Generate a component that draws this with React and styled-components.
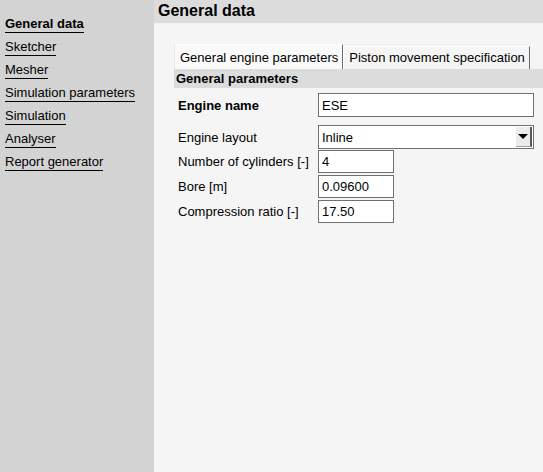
import React from 'react';
import styled, { createGlobalStyle } from 'styled-components';

const Global = createGlobalStyle`
  html, body {
    margin: 0;
    padding: 0;
    background: #f5f5f5;
  }
  body {
    font-family: "Liberation Sans", Arial, sans-serif;
    font-size: 13px;
    color: #000;
  }
`;

const Page = styled.div`
  display: flex;
  width: 543px;
  height: 472px;
  overflow: hidden;
`;

const Sidebar = styled.nav`
  width: 154px;
  flex: none;
  background: #d3d3d3;
  padding: 16px 0 0 5px;
  box-sizing: border-box;
  display: flex;
  flex-direction: column;
  align-items: flex-start;
  gap: 6px;
`;

const NavLink = styled.a`
  display: inline-block;
  color: #000;
  text-decoration: none;
  font-weight: ${p => (p.$active ? 'bold' : 'normal')};
  line-height: 16px;
  border-bottom: 1px solid #000;
  cursor: pointer;
`;

const Main = styled.main`
  flex: 1;
  display: flex;
  flex-direction: column;
  background: #f5f5f5;
`;

const Header = styled.h1`
  margin: 0;
  height: 23px;
  background: #dcdcdc;
  font-size: 16px;
  font-weight: bold;
  line-height: 21px;
  padding-left: 4px;
`;

const Content = styled.div`
  padding: 21px 0 0 20px;
`;

const TabBar = styled.div`
  display: flex;
  height: 25px;
`;

const Tab = styled.div`
  padding: 0 4px 0 5px;
  background: ${p => (p.$active ? '#fafafa' : '#f5f5f5')};
  border-top: 1px solid #fff;
  border-left: 1px solid ${p => (p.$active ? '#e6e6e6' : '#fff')};
  border-right: 1px solid #6b6b6b;
  box-sizing: border-box;
  margin-top: ${p => (p.$active ? '0' : '2px')};
  height: ${p => (p.$active ? '25px' : '23px')};
  line-height: ${p => (p.$active ? '25px' : '22px')};
`;

const SectionBar = styled.div`
  background: #dcdcdc;
  font-weight: bold;
  line-height: 19px;
  height: 19px;
  padding-left: 2px;
`;

const Form = styled.div`
  display: flex;
  flex-direction: column;
  padding-top: 5px;
`;

const Row = styled.div`
  display: flex;
  align-items: center;
  margin-top: ${p => p.$gap || 0}px;
`;

const Label = styled.label`
  width: 144px;
  padding-left: 4px;
  box-sizing: border-box;
  font-weight: ${p => (p.$bold ? 'bold' : 'normal')};
`;

const Input = styled.input`
  box-sizing: border-box;
  width: ${p => p.$w}px;
  height: ${p => p.$h || 23}px;
  border: 1px solid #707070;
  background: #fff;
  padding: 0 3px;
  font-family: inherit;
  font-size: 13px;
  color: #000;
  outline: none;
`;

const Select = styled.div`
  box-sizing: border-box;
  width: 216px;
  height: 24px;
  border: 1px solid #707070;
  background: #fff;
  display: flex;
  align-items: center;
  padding-left: 3px;
`;

const SelectValue = styled.span`
  flex: 1;
`;

const Arrow = styled.span`
  width: 16px;
  height: 20px;
  margin-right: 1px;
  background: #ececec;
  border-right: 2px solid #5a5a5a;
  border-bottom: 1px solid #a0a0a0;
  box-sizing: border-box;
  display: flex;
  align-items: center;
  justify-content: center;
  &::after {
    content: '';
    border-left: 5px solid transparent;
    border-right: 5px solid transparent;
    border-top: 5px solid #000;
  }
`;

const navItems = [
  'General data',
  'Sketcher',
  'Mesher',
  'Simulation parameters',
  'Simulation',
  'Analyser',
  'Report generator',
];

export default function App() {
  return (
    <>
      <Global />
      <Page>
        <Sidebar>
          {navItems.map((n, i) => (
            <NavLink key={n} $active={i === 0}>{n}</NavLink>
          ))}
        </Sidebar>
        <Main>
          <Header>General data</Header>
          <Content>
            <TabBar>
              <Tab $active>General engine parameters</Tab>
              <Tab>Piston movement specification</Tab>
            </TabBar>
            <SectionBar>General parameters</SectionBar>
            <Form>
              <Row>
                <Label $bold>Engine name</Label>
                <Input $w={216} $h={24} defaultValue="ESE" />
              </Row>
              <Row $gap={8}>
                <Label>Engine layout</Label>
                <Select>
                  <SelectValue>Inline</SelectValue>
                  <Arrow />
                </Select>
              </Row>
              <Row $gap={1}>
                <Label>Number of cylinders [-]</Label>
                <Input $w={76} defaultValue="4" />
              </Row>
              <Row $gap={2}>
                <Label>Bore [m]</Label>
                <Input $w={76} defaultValue="0.09600" />
              </Row>
              <Row $gap={2}>
                <Label>Compression ratio [-]</Label>
                <Input $w={76} defaultValue="17.50" />
              </Row>
            </Form>
          </Content>
        </Main>
      </Page>
    </>
  );
}
